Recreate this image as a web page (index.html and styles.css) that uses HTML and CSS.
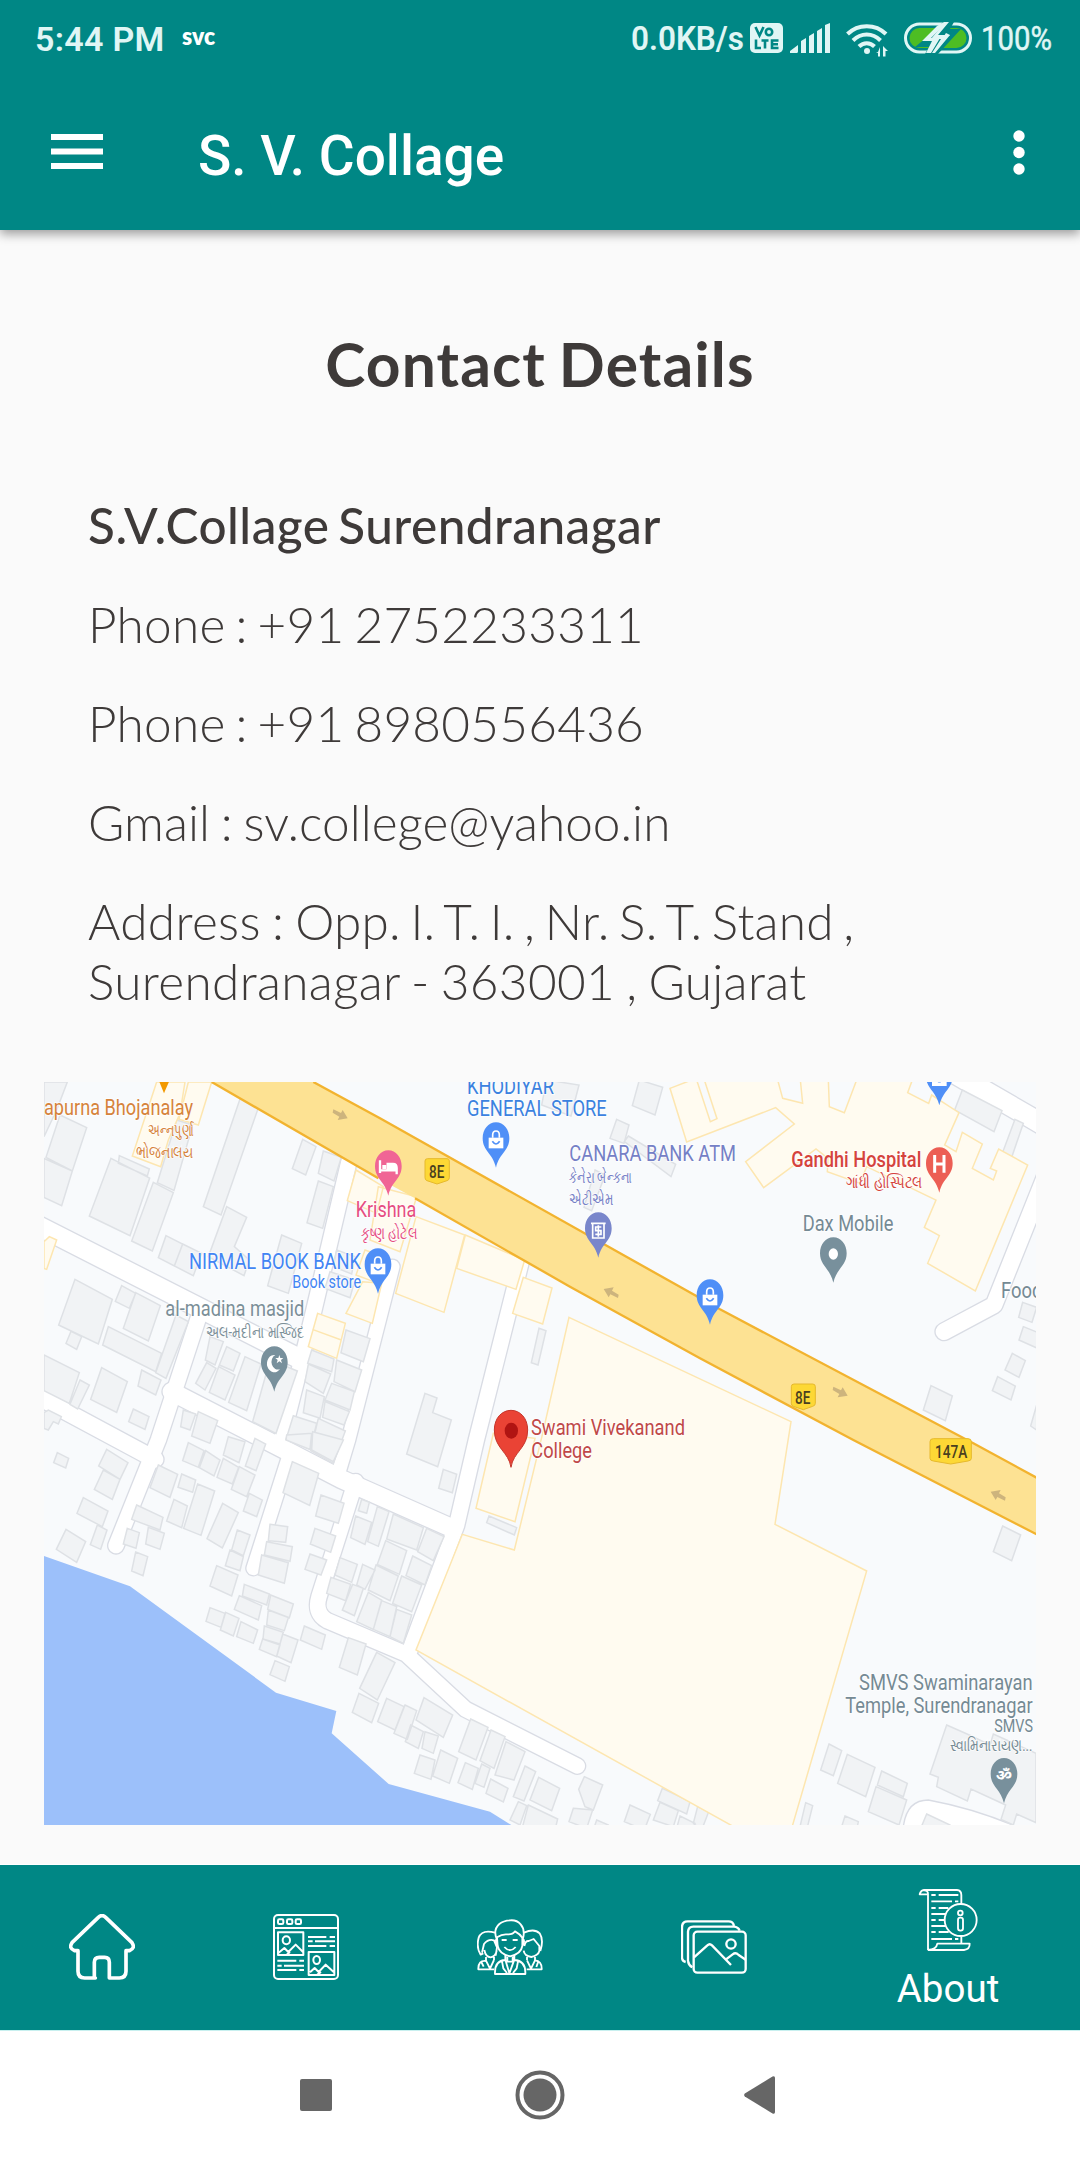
FILE: index.html
```
<!DOCTYPE html>
<html lang="en">
<head>
<meta charset="utf-8">
<title>S. V. Collage</title>
<link rel="stylesheet" href="styles.css">
</head>
<body>
<div class="screen">
  <header class="top">
    <div class="status">
      <span class="clock">5:44 PM</span>
      <svg class="svc" width="34" height="30" viewBox="0 0 34 30"><text x="0" y="22" textLength="33" lengthAdjust="spacingAndGlyphs">svc</text></svg>
      <span class="spacer"></span>
      <svg class="rate" width="114" height="44" viewBox="0 0 114 44"><text x="0" y="34" textLength="113" lengthAdjust="spacingAndGlyphs">0.0KB/s</text></svg>
      <svg class="volte" width="33" height="30" viewBox="0 0 33 30"><rect width="33" height="30" rx="5"/><g class="cut"><path d="M5.500 4l4 8.500 4-8.500"/><circle cx="19" cy="9" r="3.200"/><path d="M6 16.500v8.500h5M11.500 17.500h7M15 17.500v8M28.500 17.500H22v7.500h6.500M22 21.200h6"/></g></svg>
      <svg class="signal" width="40" height="30" viewBox="0 0 40 30"><path d="M0 30v-2l8-6v6.500q0 1.500-1.500 1.500zM11 18l5-3v15h-5zM19 13l5-3v20h-5zM27 8l5-3v25h-5zM35 2l5-2v30h-5z"/></svg>
      <svg class="wifi" width="43" height="34" viewBox="0 0 43 34"><g fill="none" stroke="#e0f6f5" stroke-width="4"><path d="M1.500 11C12 .500 29.500.500 40 11"/><path d="M7 17.500c8-8 19.500-8 27.500 0"/><path d="M13 23.500c4.500-4.500 11-4.500 15.500 0"/></g><circle cx="21" cy="28" r="3"/><path d="M34 24v9.500h-2V30l-2-1h2zM37 33.500V23l5 5h-2.500v5.500z"/></svg>
      <svg class="battery" width="68" height="32" viewBox="0 0 68 32"><rect x="1.500" y="2" width="65" height="28" rx="14" fill="none" stroke="#e0f6f5" stroke-width="3"/><rect x="5.500" y="6" width="57" height="20" rx="10" fill="#4dbd23"/><path d="M39 0 34 6 11 25H25L21 32H34L57 7H46L50 0Z" fill="#008785"/><path d="M33 4 18 19H28L22 31 27 31 36 16H27L43 0H40Z"/><path d="M45 0 34 13H46L31 31H28L37 17H27L41 0Z"/><path d="M42 11 36 20 46 13Z"/></svg>
      <svg class="percent" width="72" height="44" viewBox="0 0 72 44"><text x="0" y="33.500" textLength="71" lengthAdjust="spacingAndGlyphs">100%</text></svg>
    </div>
    <div class="appbar">
      <svg class="menu" width="52" height="36" viewBox="0 0 52 36"><path d="M0 0h52v6H0zM0 14.500h52v6H0zM0 29h52v6H0z"/></svg>
      <h1 class="title">S. V. Collage</h1>
      <svg class="more" width="12" height="46" viewBox="0 0 12 46"><circle cx="6" cy="6" r="5.700"/><circle cx="6" cy="22.500" r="5.700"/><circle cx="6" cy="39" r="5.700"/></svg>
    </div>
  </header>

  <main class="content">
    <h2 class="heading">Contact Details</h2>
    <section class="details">
      <p class="name">S.V.Collage Surendranagar</p>
      <p class="phone">Phone : +91 2752233311</p>
      <p class="phone">Phone : +91 8980556436</p>
      <p class="mail">Gmail : sv.college@yahoo.in</p>
      <p class="address">Address : <span class="street">Opp. I. T. I. , Nr. S. T. Stand ,</span><br>Surendranagar - 363001 , Gujarat</p>
    </section>

    <svg class="map" width="992" height="743" viewBox="12 36 2976 2229">
      <defs>
        <path id="pin" d="M0-136C-23-136-40-115-40-88C-40-50-10-44 0 0C10-44 40-50 40-88C40-115 23-136 0-136Z"/>
        <g id="bag"><use href="#pin" fill="#4f8ff7"/><path d="M-22-90h44v32h-44z" fill="#fff"/><path d="M-10-90v-8q0-12 10-12t10 12v8" fill="none" stroke="#fff" stroke-width="5"/><path d="M-11-79q11 16 22 0" fill="none" stroke="#4f8ff7" stroke-width="5"/></g>
        <path id="arrow" d="M-20-17 3-6 8-15 23 10-7 15-2 5-22-7Z" fill="#cdb47d"/>
        <g id="roads">
          <path class="w62" d="M-20 460 790 872"/>
          <path class="w50" d="M935 240 803 800 722 1120"/>
          <path class="w50" d="M478 735 355 1110 228 1427"/>
          <path class="w55" d="M-20 972 345 1168"/>
          <path class="w60" d="M395 965 720 1132 905 1228 1230 1372"/>
          <path class="w45" d="M750 1150 640 1495"/>
          <path class="w50" d="M947 1235 837 1580Q822 1630 862 1652L1098 1752 1277 1918 1612 2088"/>
          <path class="w50" d="M1455 530 1309 1110 1250 1365 1110 1740"/>
          <path class="w45" d="M1058 590 1030 700 925 1110 895 1210"/>
          <path class="w65" d="M2640-50 3040 182"/>
          <path class="w55" d="M3060 210 2862 705 2712 785"/>
        </g>
      </defs>
      <rect x="12" y="36" width="2976" height="2229" fill="#f8fafc"/>
      <path d="M12 1458 270 1549 708 1868 889 1923 875 1990 1046 2142 1350 2225 1430 2275H12Z" fill="#9cc0fa"/>
      <use href="#roads" class="edge"/>
      <use href="#roads" class="fill"/>
      <path d="M2590 2270Q2600 2190 2665 2190 2800 2215 2925 2268Z" fill="#fff" stroke="#d9dce4" stroke-width="4"/>

      <g class="bld">
        <path d="M12 36H82L50 120 12 200ZM12 265 97 303 65 407 12 382ZM60 135 140 173 97 303 18 262ZM238 257 328 297 322 318 235 280ZM213 265 329 324 270 497 148 438ZM340 337 400 368 337 543 275 513ZM410 150 458 165 402 361 352 338ZM603 78 658 105 543 435 490 410ZM560 410 620 442 583 530 628 570 612 617 505 560ZM378 497 428 522 403 588 355 563ZM428 522 485 550 460 617 403 588ZM788 208 828 230 797 315 757 296ZM850 243 904 262 882 333 835 310ZM835 333 880 350 848 475 801 458ZM725 495 785 520 745 670 683 647Z"/>
        <path d="M105 628 217 688 175 822 56 765ZM245 647 287 670 268 715 226 694ZM287 668 361 707 325 813 250 775ZM93 784 125 800 110 838 78 820ZM205 770 365 850 347 905 188 825ZM408 735 445 755 378 925 347 908ZM305 900 363 930 347 975 294 948ZM185 893 262 935 230 1027 152 988ZM12 855 118 908 88 1000 12 962ZM120 930 148 945 113 1017 90 1003ZM280 1017 327 1040 315 1078 266 1055ZM12 1028 25 1020 64 1040 55 1062 40 1055 25 1080 12 1075Z"/>
        <path d="M510 800 550 815 525 885 496 870ZM560 830 600 850 580 903 538 885ZM500 878 528 895 495 960 467 940ZM536 890 585 915 555 990 508 967ZM615 860 663 882 620 1022 566 997ZM690 870 772 903 708 1090 638 1055ZM430 1020 467 1032 450 1080 422 1070ZM475 1025 533 1052 510 1120 455 1098ZM815 840 882 867 875 905 803 880ZM805 882 872 912 850 970 795 935ZM890 870 965 900 945 965 882 935ZM800 960 853 980 840 1045 790 1028ZM875 940 943 965 930 1020 855 990ZM855 995 928 1025 912 1065 848 1042ZM918 780 990 806 970 875 903 848ZM760 1037 830 1060 810 1138 738 1108ZM835 1045 916 1083 880 1180 812 1142ZM890 540 945 560 935 612 880 590ZM870 605 945 630 930 683 855 655Z"/>
      </g>
      <g class="bld" transform="translate(1020 0)">
        <path d="M500 30 597 45 573 138 485 105ZM778 30 848 52 825 135 757 107ZM710 148 747 165 732 220 690 205ZM745 198 887 283 873 320 733 215ZM645 300 675 315 635 422 612 412ZM477 775 498 782 474 885 454 878ZM135 970 171 984 158 1028 214 1050 173 1190 80 1152Z"/>
      </g>
      <g class="bld" transform="translate(1980 0)">
        <path d="M787 60 906 122 882 185 764 120ZM945 148 970 160 935 262 908 247ZM968 697 1010 712 996 757 956 742ZM970 770 1020 790V838L957 810ZM937 850 976 872 957 922 915 900ZM893 920 946 948 933 990 877 962ZM693 947 757 978 736 1052 670 1020ZM1010 1005V1080L992 1068Z"/>
      </g>
      <g class="bld" transform="translate(0 1110)">
        <path d="M52 38 86 55 77 84 41 68ZM200 28 264 68 240 118 176 78ZM190 90 240 118 217 178 163 148ZM130 173 204 213 187 260 111 220ZM172 255 201 270 182 328 151 314ZM78 268 137 305 110 367 49 328ZM287 336 323 350 309 407 275 393ZM262 265 298 278 288 325 250 312ZM325 262 373 280 360 328 317 312ZM290 195 369 232 360 270 275 238ZM355 75 413 103 390 172 330 143ZM425 102 467 120 458 157 414 142ZM473 132 524 153 483 286 431 265ZM402 178 442 198 425 263 380 243ZM548 190 595 218 547 324 501 296ZM445 8 492 32 475 82 428 62ZM497 32 540 60 522 108 478 83ZM565-10 615 5 597 68 550 45ZM645-5 677 12 648 92 616 78ZM550 55 596 82 577 132 531 112ZM598 80 645 105 620 170 574 148ZM628 160 667 180 650 230 610 213Z"/>
        <path d="M592 270 630 285 610 347 575 330ZM570 330 610 350 600 392 556 377ZM530 377 594 405 575 468 510 438ZM613 433 688 462 680 495 607 468ZM598 467 665 497 655 540 583 508ZM692 465 760 492 748 533 683 508ZM685 510 745 533 733 572 680 555ZM673 558 730 577 720 612 669 597ZM668 597 720 615 710 650 658 628ZM728 582 774 600 753 668 710 648ZM705 662 748 680 735 724 690 704ZM510 503 555 520 543 562 498 544ZM557 517 597 535 580 588 541 570ZM603 545 653 570 640 610 590 590ZM793 558 856 585 845 628 781 600ZM690 253 743 260 737 307 685 302ZM680 305 757 320 750 364 673 345ZM665 345 745 368 733 430 655 405ZM757 65 836 100 809 196 729 158ZM843 165 912 190 895 250 827 228ZM825 265 887 288 872 337 811 312ZM810 342 860 360 843 405 795 388Z"/>
        <path d="M965 178 988 187 980 220 955 212ZM947 228 995 247 975 313 932 293ZM1012 200 1047 215 1015 319 983 305ZM1060 222 1150 263 1130 330 1040 297ZM1160 265 1212 290 1180 362 1133 335ZM1037 302 1100 332 1078 403 1012 373ZM1118 348 1175 377 1155 435 1098 407ZM1008 375 1075 408 1050 482 985 450ZM1085 408 1145 435 1115 515 1058 490ZM900 353 952 373 935 427 885 405ZM968 373 1005 390 975 448 950 435ZM873 412 932 433 917 482 860 460ZM938 433 970 445 943 527 907 510ZM985 457 1025 480 1000 568 950 545ZM1025 482 1070 500 1050 590 1000 568ZM1070 508 1115 525 1090 610 1050 590ZM925 593 978 612 952 705 898 682ZM1010 637 1065 668 1012 780 959 745ZM957 760 1016 790 995 848 937 817ZM1040 775 1092 800 1065 870 1013 845ZM1095 795 1130 812 1102 898 1062 880ZM1112 855 1150 875 1135 925 1096 905ZM1155 875 1195 888 1180 940 1146 925ZM740-15 815-20 810 28 738 0ZM818-25 910 0 880 65 815 30Z"/>
      </g>
      <g class="bld" transform="translate(1080 1110)">
        <path d="M130 88 170 103 157 158 116 145ZM267 228 350 263 343 285 260 248ZM72 773 158 825 130 892 48 840ZM60 945 105 960 93 1018 43 1000ZM122 930 173 955 148 1030 98 1008ZM212 837 264 862 228 960 176 935ZM273 870 315 890 282 985 240 962ZM318 905 375 935 342 1020 285 1005ZM196 968 235 985 217 1048 174 1028ZM245 972 270 985 252 1042 225 1030ZM272 1017 324 1045 310 1086 258 1060ZM375 978 407 995 372 1083 340 1070ZM416 1012 479 1045 455 1112 390 1080ZM355 1085 380 1097 360 1155 330 1140ZM385 1095 473 1137 465 1170H365ZM553 1010 608 1035 580 1110 555 1100 536 1048ZM520 1105 578 1110 560 1165 507 1145ZM590 1140 625 1155V1170H580ZM690 1095 751 1123 733 1170 673 1145ZM787 1045 870 1085 860 1122 773 1082ZM780 1087 835 1112 820 1160 760 1140ZM893 1100 926 1115 905 1170 880 1150ZM840 1128 885 1150 880 1165H830Z"/>
      </g>
      <g class="bld" transform="translate(2040 1110)">
        <path d="M848 258 902 285 875 362 820 335ZM327 912 365 932 340 1007 302 990ZM382 943 465 982 437 1070 353 1030ZM485 993 562 1030 550 1070 472 1035ZM468 1040 560 1080 537 1155 445 1115ZM257 1088 278 1097 260 1170 240 1160ZM375 1128 415 1145 410 1170 365 1160ZM620 1122 690 1155V1170H600ZM680 855 748 885 810 915 820 882 948 940V1148L890 1122 880 1155 843 1138 857 1095 753 1047 742 1083 650 1040 655 1012 630 1002Z"/>
      </g>

      <g class="poi">
        <path d="M350 36H435L420 130 385 210 362 290 277 258ZM445 36H515L475 165 417 148ZM12 515 28 500 50 510 20 598 12 595ZM948 300 1030 350 1010 430 922 392ZM1015 350 1130 380 1080 545 990 510ZM968 635 1025 640 997 760 918 730ZM975 540 1030 560 1015 640 948 615ZM833 730 916 760 890 865 805 830ZM817 778 904 810"/>
        <path d="M1128 440 1274 495 1212 727 1067 670ZM1276 495 1454 570 1428 658 1250 595ZM1450 622 1536 654 1508 762 1418 730Z"/>
        <path d="M1587 742 2253 1055 2205 1363 2480 1503 2255 2275H2090L1128 1740 1267 1393 1423 1440 1508 1090Z"/>
        <path d="M1360 1090 1485 1105 1425 1355 1308 1315Z"/>
        <path d="M1890 55 1955 30H2213L2228 85 2288 100 2281 30H2365L2368 110 2413 128 2450 30H2617L2603 68 2666 100 2675 75 2757 128 2714 225 2748 245 2767 187 2827 222 2797 295 2860 330 2870 303 2851 295 2876 237 2963 285 2806 663 2663 580 2698 497 2653 472 2688 390 2480 290 2460 340 2362 305 2364 265 2328 237 2171 353 2117 275 2263 162 2207 113 1940 216Z"/>
        <path d="M1970 30 2011 155 2031 146 1993 30" class="gap"/>
      </g>

      <path d="M515 36 1015 325 1125 385 1590 650 1980 865 2440 1110 2990 1393V1223L2800 1120 2040 718 1020 145 820 36Z" fill="#fde293"/>
      <path d="M515 36 1015 325M1125 385 1590 650 1980 865 2440 1110 2990 1393M2990 1223 2800 1120 2040 718 1020 145 820 36" fill="none" stroke="#f2b32f" stroke-width="7"/>
      <use href="#arrow" x="900" y="135"/>
      <use href="#arrow" x="2400" y="967"/>
      <use href="#arrow" transform="translate(1714 667) rotate(180)"/>
      <use href="#arrow" transform="translate(2875 1275) rotate(180)"/>

      <g class="shield">
        <path d="M1163 266h58q7 0 7 7v50q0 7-7 9l-30 10-30-10q-6-2-6-9v-50q0-7 8-7Z"/>
        <path d="M2262 942h56q8 0 8 8v50q0 7-8 9l-28 10-30-10q-6-2-6-9v-50q0-8 8-8Z"/>
        <path d="M2680 1106h104q10 0 10 9v50q0 7-10 8l-52 9-52-9q-10-1-10-8v-50q0-9 10-9Z"/>
        <text x="1167" y="325" textLength="46" lengthAdjust="spacingAndGlyphs">8E</text>
        <text x="2265" y="1001" textLength="46" lengthAdjust="spacingAndGlyphs">8E</text>
        <text x="2685" y="1164" textLength="97" lengthAdjust="spacingAndGlyphs">147A</text>
      </g>

      <path d="M355 28H390L372 70Z" fill="#f29900"/>
      <use href="#bag" x="1014" y="671"/>
      <use href="#bag" x="1368" y="293"/>
      <use href="#bag" x="2010" y="764"/>
      <use href="#bag" x="2698" y="106"/>
      <g transform="translate(1045 377)"><use href="#pin" fill="#f06595"/><path d="M-25-106v38M-25-76h50v12M-2-76v-19h16q11 0 11 12v7" fill="none" stroke="#fff" stroke-width="7"/><path d="M-2-95h16q11 0 11 12v7H-2zM-18-92h12v12h-12z" fill="#fff"/></g>
      <g transform="translate(1675 563)"><use href="#pin" fill="#7986cb"/><path d="M-22-103h44M-17-103v44h34v-44" fill="none" stroke="#fff" stroke-width="5"/><path d="M9-92H-8v11H8v11H-9M0-97v34" fill="none" stroke="#fff" stroke-width="5"/></g>
      <g transform="translate(2698 368)"><use href="#pin" fill="#ec5e54"/><path d="M-14-113v53M14-113v53M-14-86h28" fill="none" stroke="#fff" stroke-width="9"/></g>
      <g transform="translate(2380 638)"><use href="#pin" fill="#78909c"/><ellipse cy="-86" rx="14" ry="17" fill="#fff"/></g>
      <g transform="translate(703 965)"><use href="#pin" fill="#78909c"/><path d="M3-110A22 26 0 1 0 17-68 18 22 0 1 1 3-110Z" fill="#fff"/><path d="m15-110 3 9h9l-7 6 3 10-8-6-8 6 3-10-7-6h9z" fill="#fff"/></g>
      <g transform="translate(2892 2200)"><use href="#pin" fill="#78909c"/><text class="om" x="0" y="-68" text-anchor="middle">ॐ</text></g>
      <path d="M1413 1192C1406 1145 1363 1135 1363 1080 1363 1045 1385 1021 1413 1021S1463 1045 1463 1080C1463 1135 1420 1145 1413 1192Z" fill="#ea4335" stroke="#c5362b" stroke-width="3"/>
      <ellipse cx="1414" cy="1082" rx="20" ry="24" fill="#b01412"/>

      <g class="label">
        <g fill="#d6833b"><text x="12" y="134" textLength="447" lengthAdjust="spacingAndGlyphs">apurna Bhojanalay</text><text class="gu" x="324" y="198" textLength="138" lengthAdjust="spacingAndGlyphs">અન્નપુર્ણા</text><text class="gu" x="288" y="263" textLength="172" lengthAdjust="spacingAndGlyphs">ભોજનાલય</text></g>
        <g fill="#4285f4"><text x="447" y="597" textLength="516" lengthAdjust="spacingAndGlyphs">NIRMAL BOOK BANK</text><text class="sub" x="757" y="654" textLength="206" lengthAdjust="spacingAndGlyphs">Book store</text></g>
        <g fill="#7b8f98"><text x="376" y="739" textLength="417" lengthAdjust="spacingAndGlyphs">al-madina masjid</text><text class="gu" x="497" y="804" textLength="296" lengthAdjust="spacingAndGlyphs">અલ-મદીના મસ્જિદ</text></g>
        <g fill="#e64d82"><text x="947" y="441" textLength="182" lengthAdjust="spacingAndGlyphs">Krishna</text><text class="gu" x="962" y="508" textLength="170" lengthAdjust="spacingAndGlyphs">કૃષ્ણ હોટેલ</text></g>
        <g fill="#3b82e0"><text x="1281" y="73" textLength="261" lengthAdjust="spacingAndGlyphs">KHODIYAR</text><text x="1281" y="138" textLength="419" lengthAdjust="spacingAndGlyphs">GENERAL STORE</text></g>
        <g fill="#7580c6"><text x="1588" y="274" textLength="500" lengthAdjust="spacingAndGlyphs">CANARA BANK ATM</text><text class="gu" x="1588" y="339" textLength="188" lengthAdjust="spacingAndGlyphs">કેનેરા બેન્કના</text><text class="gu" x="1588" y="405" textLength="132" lengthAdjust="spacingAndGlyphs">એટીએમ</text></g>
        <g fill="#d5433d"><text class="md" x="2254" y="292" textLength="390" lengthAdjust="spacingAndGlyphs">Gandhi Hospital</text><text class="gu" x="2418" y="355" textLength="230" lengthAdjust="spacingAndGlyphs">ગાંધી હોસ્પિટલ</text></g>
        <g fill="#758a94"><text x="2288" y="484" textLength="272" lengthAdjust="spacingAndGlyphs">Dax Mobile</text><text x="2883" y="684" textLength="124" lengthAdjust="spacingAndGlyphs">Food</text><text x="2457" y="1860" textLength="521" lengthAdjust="spacingAndGlyphs">SMVS Swaminarayan</text><text x="2416" y="1929" textLength="562" lengthAdjust="spacingAndGlyphs">Temple, Surendranagar</text><text class="sub" x="2863" y="1986" textLength="116" lengthAdjust="spacingAndGlyphs">SMVS</text><text class="gu" x="2730" y="2043" textLength="247" lengthAdjust="spacingAndGlyphs">સ્વામિનારાયણ...</text></g>
        <g fill="#c04848"><text x="1473" y="1096" textLength="462" lengthAdjust="spacingAndGlyphs">Swami Vivekanand</text><text x="1474" y="1164" textLength="182" lengthAdjust="spacingAndGlyphs">College</text></g>
      </g>
    </svg>
  </main>

  <nav class="tabs">
    <a class="tab"><svg width="66" height="66" viewBox="87 162 198 198"><path class="s" stroke-width="11" d="M166 354H134Q114 354 114 334V272H104Q85 265 96 248L175 172Q186 162 197 172L276 248Q287 265 268 272H258V334Q258 354 238 354H208V307Q208 292 194 292H178Q163 292 163 307V354Z"/></svg></a>
    <a class="tab"><svg width="66" height="66" viewBox="699 162 198 198"><rect class="s" x="702" y="165" width="192" height="192" rx="12" stroke-width="6"/><g class="s" stroke-width="6"><path d="M702 204H894M714 217H790V285H714ZM806 276H883V345H806ZM716 278 733 264 745 276 767 254 789 276M740 284 750 276M810 337 824 324 836 336 857 314 881 336M832 344 843 336"/><rect x="714" y="178" width="16" height="14" rx="4"/><rect x="741" y="178" width="16" height="14" rx="4"/><rect x="767" y="178" width="16" height="14" rx="4"/><ellipse cx="739" cy="241" rx="11" ry="12"/><ellipse cx="830" cy="300" rx="10" ry="12"/><path d="M804 231H859M869 231H885M804 244H818M825 244H885M804 258H859M869 258H885M712 302H769M778 302H792M712 317H725M732 317H792M712 330H769M778 330H792"/></g></svg></a>
    <a class="tab"><svg width="66" height="66" viewBox="1311 162 198 198"><g class="s" stroke-width="5.500"><path d="M1371 240Q1358 210 1378 192 1390 182 1410 181 1430 179 1442 193 1457 210 1448 240M1371 232Q1386 222 1400 223 1418 225 1425 214 1440 222 1447 233V258Q1443 282 1410 289 1378 282 1373 258ZM1371 235Q1362 243 1373 258M1448 235Q1457 243 1447 258M1385 240H1400M1418 240H1433M1393 261Q1410 280 1427 261M1396 286V300Q1363 302 1365 342H1456Q1458 302 1423 300V286M1396 299 1408 340 1423 299M1402 291V305H1418V291M1386 304 1390 325 1401 339M1434 304 1430 325 1419 339"/><path d="M1365 218Q1326 207 1316 233 1308 262 1322 284L1330 280M1326 278 1332 252Q1345 236 1362 241L1371 262 1367 287M1333 270Q1337 291 1352 292 1366 290 1370 273M1338 291V303Q1314 300 1315 328H1362M1362 291V300M1338 302 1350 326 1362 300M1324 306 1331 320M1452 218Q1483 204 1499 220 1512 240 1501 273M1453 258Q1456 242 1466 243L1481 237 1498 258V273Q1495 286 1474 291 1453 288 1451 272M1461 291V300M1485 291V301Q1506 303 1505 328H1460M1461 301 1473 326 1485 301M1494 307 1489 321"/></g></svg></a>
    <a class="tab"><svg width="66" height="66" viewBox="363 162 198 198"><g class="s" stroke-width="7"><rect x="401" y="215" width="156" height="123" rx="11"/><path d="M522 197Q519 184 506 184H383Q366 184 366 202V292Q366 303 377 306M384 303V215Q385 200 400 200H522Q535 201 539 212M384 303Q386 316 397 322M402 292 442 256Q449 249 456 256L513 315M498 298 518 283Q527 276 536 285L557 299"/><circle cx="513" cy="252" r="14"/></g></svg></a>
    <a class="tab tab-active"><svg width="66" height="66" viewBox="1065 81 198 198"><g class="s" stroke-width="5.500"><path d="M1104 271V103H1079Q1082 91 1092 90H1191Q1204 91 1204 105V132M1092 91Q1105 91 1104 103M1204 229V250M1104 270H1212Q1230 268 1229 251H1132Q1129 269 1104 270"/><circle cx="1202" cy="180" r="48"/><path d="M1114 105H1127M1136 105H1195M1114 124H1176M1185 124H1195M1114 144H1127M1136 144H1165M1114 162H1157M1114 180H1127M1136 180H1153M1114 198H1157M1114 216H1127M1136 216H1166M1114 237H1176M1185 237H1195"/><circle cx="1201" cy="159" r="7"/><rect x="1194" y="173" width="15" height="39" rx="7"/></g></svg><span>About</span></a>
  </nav>

  <footer class="sysnav">
    <svg width="32" height="32" viewBox="0 0 32 32"><rect width="32" height="32" rx="2"/></svg>
    <svg class="homekey" width="50" height="50" viewBox="0 0 50 50"><circle cx="25" cy="25" r="22.500" fill="none" stroke="#666" stroke-width="4"/><circle cx="25" cy="25" r="16.500"/></svg>
    <svg width="32" height="38" viewBox="0 0 32 38"><path d="M.800 17.600Q-.500 19 .800 20.400L28.500 37.500Q31 38.500 31 36V2Q31-.500 28.500.600Z"/></svg>
  </footer>
</div>
</body>
</html>
```
FILE: styles.css
```
* { box-sizing: border-box; }
body { margin: 0; background: #fafafa; }
svg { display: block; flex: none; }
h1, h2, p { margin: 0; font-weight: 400; }

.screen {
  width: 1080px;
  height: 2160px;
  display: flex;
  flex-direction: column;
  overflow: hidden;
  background: #fafafa;
  font-family: Roboto, sans-serif;
}

.top {
  height: 230px;
  flex: none;
  background: #008785;
  box-shadow: 0 4px 10px rgba(0, 0, 0, .38);
}
.status {
  height: 76px;
  padding: 0 27px 0 35px;
  display: flex;
  align-items: center;
  color: #e0f6f5;
  fill: #e0f6f5;
}
.status svg { overflow: visible; }
.clock { font-size: 34px; font-weight: 600; line-height: 40px; width: 129px; white-space: nowrap; padding-top: 2px; letter-spacing: .300px; }
.spacer { flex: 1; }
.svc { margin-left: 18px; fill: #fff; }
.svc text { font: 800 25px Lato, sans-serif; }
.rate text { font: 600 32.500px Roboto, sans-serif; }
.percent text { font: 400 33.500px Roboto, sans-serif; stroke: #e0f6f5; stroke-width: .5px; }
.volte { margin-left: 5px; }
.volte .cut { fill: none; stroke: #008785; stroke-width: 2.600; }
.signal { margin-left: 7px; }
.wifi { margin-left: 16px; margin-top: 3px; }
.battery { margin-left: 15px; }
.percent { margin-left: 9px; }

.appbar {
  height: 154px;
  padding: 0 55px 0 51px;
  display: flex;
  align-items: center;
  color: #fff;
  fill: #fff;
}
.menu { margin-bottom: 3px; }
.title { margin-left: 95px; flex: 1; font-size: 55px; font-weight: 500; line-height: 64px; margin-top: 6px; }

.content { flex: 1; min-height: 0; color: #3e3a39; font-family: Lato, sans-serif; }
.heading {
  padding-top: 97px;
  font-size: 60.500px;
  line-height: 73px;
  font-weight: 700;
  letter-spacing: 1.150px;
  word-spacing: -3px;
  text-align: center;
}
.details {
  padding: 95.500px 40px 0 88px;
  display: flex;
  flex-direction: column;
  gap: 39.700px;
  font-size: 49.500px;
  line-height: 59.500px;
  height: 682px;
}
.details p { font-weight: 300; white-space: nowrap; word-spacing: -2.700px; }
.details .name { font-weight: 500; letter-spacing: .450px; word-spacing: -4px; }
.details .phone { letter-spacing: .250px; word-spacing: -3.700px; }
.details .mail { letter-spacing: .050px; }
.details .address { letter-spacing: .350px; }
.details .street { letter-spacing: .200px; word-spacing: -4.100px; }

.map { margin-left: 44px; }
.edge { fill: none; stroke: #d9dce4; stroke-linejoin: round; stroke-linecap: round; }
.fill { fill: none; stroke: #fff; stroke-linejoin: round; stroke-linecap: round; }
.edge { --extra: 8px; }
.fill { --extra: 0px; }
.w45 { stroke-width: calc(41px + var(--extra)); }
.w50 { stroke-width: calc(46px + var(--extra)); }
.w55 { stroke-width: calc(50px + var(--extra)); }
.w60 { stroke-width: calc(54px + var(--extra)); }
.w65 { stroke-width: calc(60px + var(--extra)); }
.w62 { stroke-width: calc(58px + var(--extra)); }
.bld { fill: #f1f3f5; stroke: #dee1e5; stroke-width: 4.500px; }
.poi { fill: #fffbf0; stroke: #fde6b0; stroke-width: 4.500px; }
.poi .gap { fill: #f8fafc; }
.shield { fill: #fdd835; stroke: #e6b92c; stroke-width: 3px; }
.shield text { font: 500 54px Roboto, sans-serif; fill: #4a4020; stroke: none; }
.label text {
  font-family: Roboto, "Noto Sans", sans-serif;
  font-size: 66px;
  paint-order: stroke;
  stroke: #fff;
  stroke-opacity: .7;
  stroke-width: 6px;
}
.label .md { font-weight: 500; }
.label .sub { font-size: 53px; }
.label .gu { font-size: 52px; }
.om { font: 700 48px "Noto Sans", sans-serif; fill: #fff; }

.tabs {
  height: 165px;
  flex: none;
  display: flex;
  background: #008785;
  box-shadow: 0 -1px 0 #fff, 0 1px 0 #c8f0ef;
  position: relative;
}
.tab {
  width: 204px;
  display: flex;
  flex-direction: column;
  align-items: center;
  justify-content: center;
  color: #fff;
}
.tab svg { margin-bottom: 1px; }
.tab-active { width: 264px; justify-content: flex-start; padding-top: 22px; }
.tab-active span { font-size: 38.500px; line-height: 46px; margin-top: 12px; }
.s { fill: none; stroke: #fff; stroke-linejoin: round; }

.sysnav {
  height: 130px;
  flex: none;
  display: flex;
  align-items: center;
  justify-content: space-between;
  padding: 0 304px 0 300px;
  background: #fff;
  fill: #666;
}
.homekey { margin-left: 4px; }
```
